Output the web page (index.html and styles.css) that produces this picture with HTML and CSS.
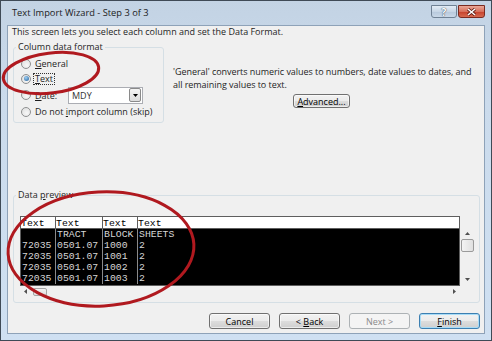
FILE: index.html
```html
<!DOCTYPE html>
<html lang="en">
<head>
    <meta charset="UTF-8" />
    <title>Text Import Wizard - Step 3 of 3</title>
    <link rel="stylesheet" href="styles.css">
</head>
<body>
  <div class="window">
    <div class="titlebar">
      <span class="title">Text Import Wizard - Step 3 of 3</span>
      <div class="caption-buttons">
        <div class="cap-btn help">?</div>
        <div class="cap-btn close">
          <svg width="11" height="8" viewBox="0 0 11 8"><path d="M2 1 L9 7 M9 1 L2 7" stroke="#5a1a12" stroke-width="3" /><path d="M2 1 L9 7 M9 1 L2 7" stroke="#fff" stroke-width="1.6" /></svg>
        </div>
      </div>
    </div>

    <div class="client">
      <p class="intro">This screen lets you select each column and set the Data Format.</p>

      <div class="top-row">
        <fieldset class="group format">
          <legend>Column data format</legend>
          <div class="radio"><span class="dot"></span><span><u>G</u>eneral</span></div>
          <div class="radio checked"><span class="dot"></span><span class="focus"><u>T</u>ext</span></div>
          <div class="radio date">
            <span class="dot"></span><span class="date-label"><u>D</u>ate:</span>
            <div class="combo">
              <span class="combo-value">MDY</span>
              <span class="combo-drop"><svg width="5" height="3" viewBox="0 0 5 3"><path d="M0 0 H5 L2.5 3 Z" fill="#000" /></svg></span>
            </div>
          </div>
          <div class="radio"><span class="dot"></span><span>Do not <u>i</u>mport column (skip)</span></div>
        </fieldset>

        <div class="explain">
          <p>'General' converts numeric values to numbers, date values to dates, and<br>all remaining values to text.</p>
          <button class="btn advanced"><u>A</u>dvanced...</button>
        </div>
      </div>

      <fieldset class="group preview">
        <legend>Data <u>p</u>review</legend>
        <div class="preview-body">
          <div class="grid-row">
            <div class="grid">
              <div class="col c1">
                <div class="head">Text</div>
                <div class="cell"></div>
                <div class="cell">72035</div>
                <div class="cell">72035</div>
                <div class="cell">72035</div>
                <div class="cell">72035</div>
              </div>
              <div class="col c2">
                <div class="head">Text</div>
                <div class="cell">TRACT</div>
                <div class="cell">0501.07</div>
                <div class="cell">0501.07</div>
                <div class="cell">0501.07</div>
                <div class="cell">0501.07</div>
              </div>
              <div class="col c3">
                <div class="head">Text</div>
                <div class="cell">BLOCK</div>
                <div class="cell">1000</div>
                <div class="cell">1001</div>
                <div class="cell">1002</div>
                <div class="cell">1003</div>
              </div>
              <div class="col c4">
                <div class="head">Text</div>
                <div class="cell">SHEETS</div>
                <div class="cell">2</div>
                <div class="cell">2</div>
                <div class="cell">2</div>
                <div class="cell">2</div>
              </div>
            </div>
            <div class="vscroll">
              <div class="arrow"><svg width="5" height="3" viewBox="0 0 5 3"><path d="M0 3 H5 L2.5 0 Z" fill="#505050" /></svg></div>
              <div class="thumb"></div>
              <div class="track"></div>
              <div class="arrow"><svg width="5" height="3" viewBox="0 0 5 3"><path d="M0 0 H5 L2.5 3 Z" fill="#505050" /></svg></div>
            </div>
          </div>
          <div class="hscroll">
            <div class="arrow"><svg width="3" height="5" viewBox="0 0 3 5"><path d="M3 0 V5 L0 2.5 Z" fill="#505050" /></svg></div>
            <div class="thumb"></div>
            <div class="track"></div>
            <div class="arrow"><svg width="3" height="5" viewBox="0 0 3 5"><path d="M0 0 V5 L3 2.5 Z" fill="#505050" /></svg></div>
          </div>
        </div>
      </fieldset>

      <div class="buttons">
        <button class="btn">Cancel</button>
        <button class="btn">&lt; <u>B</u>ack</button>
        <button class="btn" disabled>Next &gt;</button>
        <button class="btn default"><u>F</u>inish</button>
      </div>
    </div>
  </div>

  <!-- red annotation rings drawn over the dialog -->
  <svg class="marks" width="492" height="341" viewBox="0 0 492 341">
    <ellipse cx="51" cy="73" rx="48" ry="20" transform="rotate(-7 51 73)" />
    <ellipse cx="101" cy="249" rx="93" ry="57" transform="rotate(-3 101 249)" />
  </svg>
</body>
</html>
```

FILE: styles.css
```css
* {
    margin: 0;
    padding: 0;
    box-sizing: border-box;
}

body {
    position: relative;
    width: 492px;
    height: 341px;
    overflow: hidden;
    font-family: 'Open Sans', sans-serif;
    font-size: 9px;
    color: #1e1e1e;
    background: #fff;
}

.window {
    width: 492px;
    height: 341px;
    border: 1px solid #3f4a56;
    padding: 0 6px 6px;
    background: linear-gradient(#c3d3e4, #cbdbec 30%, #cfe0f2);
    display: flex;
    flex-direction: column;
}

.titlebar {
    height: 24px;
    display: flex;
    justify-content: space-between;
}

.title {
    padding-left: 5px;
    line-height: 24px;
    font-size: 9.3px;
    color: #1b1b1b;
}

.caption-buttons {
    display: flex;
    gap: 1px;
    margin-top: 4px;
    height: 13px;
}

.cap-btn {
    width: 26px;
    height: 13px;
    border: 1px solid #6f8194;
    border-radius: 0 0 3px 3px;
    display: flex;
    align-items: center;
    justify-content: center;
}

    .cap-btn.help {
        background: linear-gradient(#e3ecf5, #c7d6e6 50%, #b6c8db 51%, #c9d8e8);
        color: #fff;
        font-weight: 700;
        font-size: 10px;
        text-shadow: 0 0 1px #3a4a5c, 0 0 1px #3a4a5c;
    }

    .cap-btn.close {
        width: 27px;
        border-color: #7a2a20;
        background: linear-gradient(#eaa797, #d7705c 50%, #c6402b 51%, #d66a50);
    }

.client {
    flex: 1;
    background: #f0f0f0;
    border: 1px solid #8ea2b8;
    padding: 0 4px 4px;
    display: flex;
    flex-direction: column;
}

.intro {
    line-height: 12px;
}

.top-row {
    display: flex;
    align-items: flex-start;
    margin-top: 3px;
}

.group {
    border: 1px solid #d5dfe5;
    border-radius: 3px;
    padding: 0 0 0 2px;
    min-width: 0;
}

    .group legend {
        padding: 0 2px;
        line-height: 12px;
    }

.format {
    margin-left: 1px;
    width: 151px;
    height: 82px;
    padding-top: 3px;
}

.radio {
    display: flex;
    align-items: center;
    height: 15px;
    margin-left: 5px;
}

    .radio.date {
        height: 18px;
    }

.dot {
    width: 10px;
    height: 10px;
    margin-right: 4px;
    border: 1px solid #8f9091;
    border-radius: 50%;
    background: radial-gradient(circle at 60% 65%, #f7f7f7, #dcdcdc);
    flex-shrink: 0;
    display: flex;
    align-items: center;
    justify-content: center;
}

.checked .dot::after {
    content: '';
    width: 5px;
    height: 5px;
    border-radius: 50%;
    background: radial-gradient(circle at 40% 35%, #9fd0f5, #1f5c96);
}

.focus {
    margin-left: -2px;
    padding: 0 1px;
    border: 1px dotted #333;
    line-height: 10px;
}

.date-label {
    width: 33px;
}

.combo {
    width: 75px;
    height: 17px;
    border: 1px solid #abadb3;
    background: #fff;
    display: flex;
    align-items: center;
    padding: 1px;
}

.combo-value {
    flex: 1;
    padding-left: 2px;
    color: #333;
}

.combo-drop {
    width: 12px;
    height: 14px;
    border: 1px solid #8a8a8a;
    border-radius: 2px;
    background: linear-gradient(#f4f4f4, #dcdcdc);
    display: flex;
    align-items: center;
    justify-content: center;
}

.explain {
    margin-left: 9px;
    padding-top: 25px;
    line-height: 12.5px;
    letter-spacing: -0.05px;
    white-space: nowrap;
}

.btn {
    width: 61px;
    height: 16px;
    border: 1px solid #707070;
    border-radius: 3px;
    background: linear-gradient(#f2f2f2, #ebebeb 50%, #dddddd 51%, #cfcfcf);
    font-family: inherit;
    font-size: 9px;
    letter-spacing: 0;
    color: #000;
    box-shadow: inset 0 0 0 1px rgba(255, 255, 255, 0.6);
}

    .btn:disabled {
        border-color: #adb2b5;
        background: #f4f4f4;
        color: #8a8a8a;
        box-shadow: none;
    }

    .btn.default {
        border-color: #3c7fb1;
        box-shadow: inset 0 0 0 1px #a8dcf7;
    }

.advanced {
    display: block;
    width: 57px;
    height: 14px;
    margin: 3px 0 0 120px;
}

.preview {
    margin-top: 66px;
    margin-left: 1px;
    height: 114px;
    padding-top: 15px;
}

.preview-body {
    margin-left: 4px;
}

.grid-row {
    display: flex;
}

.grid {
    width: 440px;
    height: 70px;
    border: 1px solid #5e5e5e;
    background: #000;
    display: flex;
    font-family: 'Liberation Mono', monospace;
    font-size: 9.8px;
}

.col {
    display: flex;
    flex-direction: column;
}

    .col.c1 { width: 35px; }
    .col.c2 { width: 47px; }
    .col.c3 { width: 35px; }
    .col.c4 { flex: 1; }

.head {
    height: 12px;
    line-height: 13px;
    background: #fff;
    color: #000;
    border-bottom: 1px solid #5e5e5e;
    border-right: 1px solid #5e5e5e;
    overflow: hidden;
}

.cell {
    height: 11px;
    line-height: 11px;
    color: #d6d6d6;
    padding-left: 1px;
    border-right: 1px solid #8a8a8a;
}

.c4 .head,
.c4 .cell {
    border-right: none;
}

.vscroll {
    width: 14px;
    height: 57px;
    margin-top: 12px;
    display: flex;
    flex-direction: column;
    align-items: center;
}

    .vscroll .arrow {
        height: 11px;
        display: flex;
        align-items: center;
    }

    .vscroll .thumb {
        width: 13px;
        height: 13px;
        margin-left: 1px;
        border: 1px solid #9a9a9a;
        border-radius: 2px;
        background: linear-gradient(90deg, #f3f3f3, #e0e0e0);
    }

.track {
    flex: 1;
}

.hscroll {
    width: 440px;
    height: 11px;
    display: flex;
    align-items: center;
}

    .hscroll .arrow {
        width: 11px;
        display: flex;
        justify-content: center;
    }

    .hscroll .thumb {
        width: 14px;
        height: 8px;
        margin-left: 2px;
        border: 1px solid #a5a5a5;
        border-radius: 2px;
        background: linear-gradient(#f3f3f3, #dedede);
    }

.buttons {
    display: flex;
    justify-content: flex-end;
    gap: 9px;
    margin-top: 10px;
}

.marks {
    position: absolute;
    top: 0;
    left: 0;
    pointer-events: none;
}

    .marks ellipse {
        fill: none;
        stroke: #b0191f;
        stroke-width: 3;
    }
```
